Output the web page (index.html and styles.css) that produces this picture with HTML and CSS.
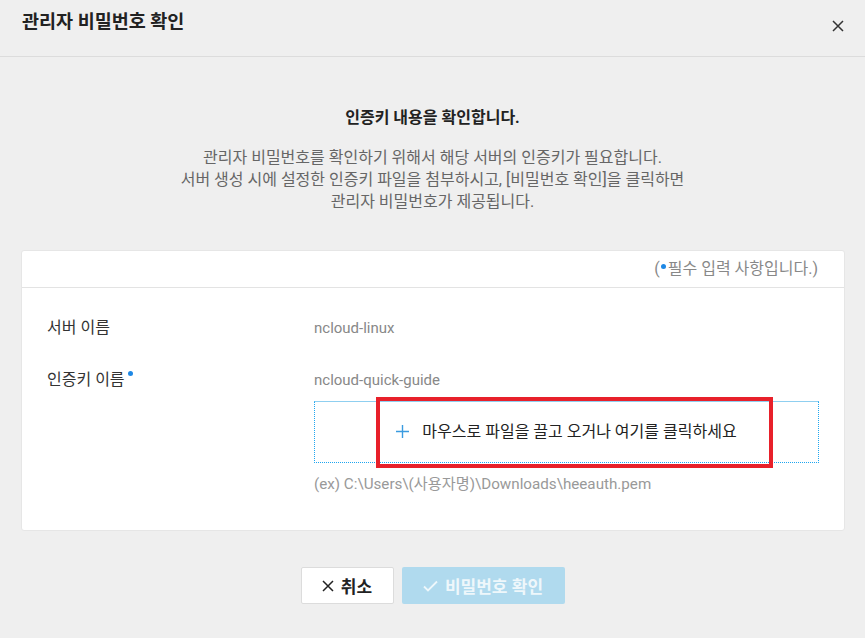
FILE: index.html
```html
<!DOCTYPE html>
<html>
<head>
  <title>관리자 비밀번호 확인</title>
  <link rel="stylesheet" href="styles.css">
</head>
<body>
  <div class="modal">
    <div class="modal__header">
      <h2 class="modal__title">관리자 비밀번호 확인</h2>
      <button class="modal__close">
        <svg width="12" height="12" viewBox="0 0 12 12"><path d="M1 1L11 11M11 1L1 11" stroke="#333" stroke-width="1.5" fill="none"/></svg>
      </button>
    </div>

    <div class="intro">
      <h3 class="intro__title">인증키 내용을 확인합니다.</h3>
      <p class="intro__desc">
        관리자 비밀번호를 확인하기 위해서 해당 서버의 인증키가 필요합니다.<br>
        서버 생성 시에 설정한 인증키 파일을 첨부하시고, [비밀번호 확인]을 클릭하면<br>
        관리자 비밀번호가 제공됩니다.
      </p>
    </div>

    <div class="card">
      <div class="card__head">(<span class="dot"></span>필수 입력 사항입니다.)</div>
      <div class="card__body">
        <div class="row">
          <div class="row__label">서버 이름</div>
          <div class="row__value">ncloud-linux</div>
        </div>
        <div class="row">
          <div class="row__label">인증키 이름<span class="dot dot--up"></span></div>
          <div class="row__value">
            <div>ncloud-quick-guide</div>
            <div class="drop">
              <svg class="drop__plus" width="13" height="13" viewBox="0 0 13 13"><path d="M6.5 0V13M0 6.5H13" stroke="#3a9be0" stroke-width="1.4" fill="none"/></svg>
              마우스로 파일을 끌고 오거나 여기를 클릭하세요
              <div class="highlight"></div>
            </div>
            <div class="hint">(ex) C:\Users\(사용자명)\Downloads\heeauth.pem</div>
          </div>
        </div>
      </div>
    </div>

    <div class="actions">
      <button class="btn btn--cancel">
        <svg class="btn__icon" width="12" height="12" viewBox="0 0 12 12"><path d="M1 1L11 11M11 1L1 11" stroke="#222" stroke-width="1.5" fill="none"/></svg>
        취소
      </button>
      <button class="btn btn--ok">
        <svg class="btn__icon" width="15" height="12" viewBox="0 0 15 12"><path d="M1 6.5L5 10.5L14 1.5" stroke="#eef7fb" stroke-width="1.8" fill="none"/></svg>
        비밀번호 확인
      </button>
    </div>
  </div>
</body>
</html>
```

FILE: styles.css
```css
body {
  margin: 0;
  background-color: #efefef;
  font-family: Roboto, "Noto Sans CJK KR", sans-serif;
  color: #222;
}

.modal {
  width: 865px;
  height: 638px;
  overflow: hidden;
}

.modal__header {
  display: flex;
  justify-content: space-between;
  align-items: flex-start;
  height: 46px;
  padding: 10px 22px 0 22px;
  border-bottom: 1px solid #dcdcdc;
}

.modal__title {
  margin: 0;
  font-size: 18.5px;
  line-height: 24px;
  font-weight: bold;
  color: #222;
}

.modal__close {
  background: none;
  border: none;
  padding: 0;
  margin: 10px -1px 0 0;
  line-height: 0;
  cursor: pointer;
}

.intro {
  text-align: center;
  padding-top: 49px;
}

.intro__title {
  margin: 0;
  font-size: 16px;
  line-height: 24px;
  font-weight: bold;
  color: #222;
}

.intro__desc {
  margin: 17px 0 0 0;
  font-size: 16px;
  line-height: 22px;
  color: #666;
}

.card {
  margin: 37px 20px 0 21px;
  background-color: #fff;
  border: 1px solid #e6e6e6;
  border-radius: 3px;
}

.card__head {
  text-align: right;
  padding: 0 26px;
  height: 36px;
  line-height: 36px;
  font-size: 16px;
  color: #888;
  border-bottom: 1px solid #e3e3e3;
}

.dot {
  display: inline-block;
  width: 5px;
  height: 5px;
  border-radius: 50%;
  background-color: #1e88e5;
  vertical-align: 5px;
  margin: 0 2px 0 1px;
}

.dot--up {
  vertical-align: 9px;
  margin-left: 3px;
}

.card__body {
  padding: 28px 25px 34px 25px;
}

.row {
  display: grid;
  grid-template-columns: 267px 1fr;
  font-size: 16px;
  line-height: 24px;
  margin-bottom: 28px;
}

.row:last-child {
  margin-bottom: 0;
}

.row__label {
  color: #333;
}

.row__value {
  color: #888;
  font-size: 15px;
}

.drop {
  position: relative;
  margin-top: 9px;
  height: 60px;
  border: 1px dotted #1fa6f0;
  border-top: 1px solid #8fcff0;
  text-align: center;
  line-height: 60px;
  color: #222;
  font-size: 16px;
}

.drop__plus {
  vertical-align: -1px;
  margin-right: 9px;
}

.highlight {
  position: absolute;
  left: 61px;
  top: -5px;
  width: 389px;
  height: 63px;
  border: 4px solid #e8202a;
}

.hint {
  margin-top: 9px;
  color: #999;
  font-size: 15.2px;
}

.actions {
  display: flex;
  justify-content: center;
  gap: 8px;
  margin-top: 36px;
}

.btn {
  display: flex;
  align-items: center;
  justify-content: center;
  height: 37px;
  border-radius: 2px;
  font-family: Roboto, "Noto Sans CJK KR", sans-serif;
  font-size: 17px;
  font-weight: bold;
  cursor: pointer;
}

.btn--cancel {
  width: 93px;
  background-color: #fff;
  border: 1px solid #dcdcdc;
  color: #222;
}

.btn--ok {
  width: 163px;
  background-color: #b0daee;
  border: none;
  color: #eef7fb;
}

.btn__icon {
  margin-right: 7px;
}
```
